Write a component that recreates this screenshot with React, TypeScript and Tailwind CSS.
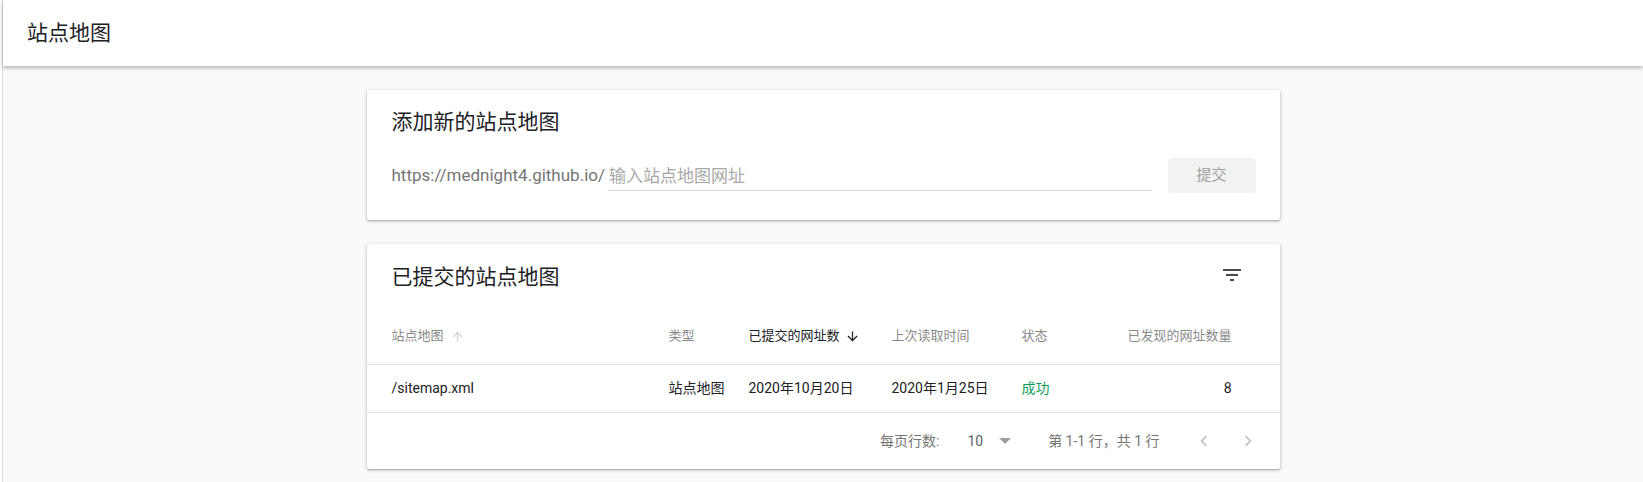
import React from 'react';

const font = "font-['Roboto','Noto_Sans_CJK_SC',sans-serif]";

const FilterIcon: React.FC = () => (
  <svg width="24" height="24" viewBox="0 0 24 24" fill="#4a4a4a">
    <path d="M10 18h4v-2h-4v2zM3 6v2h18V6H3zm3 7h12v-2H6v2z" />
  </svg>
);

const ArrowUp: React.FC<{ color: string }> = ({ color }) => (
  <svg width="15" height="15" viewBox="0 0 24 24" fill={color}>
    <path d="M4 12l1.41 1.41L11 7.83V20h2V7.83l5.58 5.59L20 12l-8-8-8 8z" />
  </svg>
);

const ArrowDown: React.FC<{ color: string }> = ({ color }) => (
  <svg width="15" height="15" viewBox="0 0 24 24" fill={color}>
    <path d="M20 12l-1.41-1.41L13 16.17V4h-2v12.17l-5.58-5.59L4 12l8 8 8-8z" />
  </svg>
);

const Chevron: React.FC<{ dir: 'left' | 'right' }> = ({ dir }) => (
  <svg width="22" height="22" viewBox="0 0 24 24" fill="#c4c4c4">
    {dir === 'left' ? (
      <path d="M15.41 7.41L14 6l-6 6 6 6 1.41-1.41L10.83 12z" />
    ) : (
      <path d="M10 6L8.59 7.41 13.17 12l-4.58 4.59L10 18l6-6z" />
    )}
  </svg>
);

const cardShadow = 'shadow-[0_1px_2px_rgba(0,0,0,0.28),0_1px_4px_1px_rgba(0,0,0,0.1)]';

export default function App() {
  return (
    <div className={`flex min-h-screen bg-[#fafafa] ${font}`}>
      {/* sidebar edge */}
      <div className="w-[3px] shrink-0 border-r border-[#dcdcdc] bg-white" />

      <div className="flex-1 flex flex-col">
        {/* Header */}
        <header className="h-[66px] bg-white flex items-center pl-[24px] shadow-[0_2px_4px_rgba(0,0,0,0.28)] relative z-10">
          <h1 className="text-[21px] text-[#202124] leading-none">站点地图</h1>
        </header>

        <main className="flex flex-col items-center pt-[24px] pb-[14px] gap-[24px]">
          {/* Add new sitemap */}
          <section className={`w-[913px] bg-white rounded-[2px] ${cardShadow} px-[25px] pt-[20px] pb-[27px]`}>
            <h2 className="text-[21px] leading-[24px] text-[#202124]">添加新的站点地图</h2>
            <div className="flex items-center mt-[24px] -mr-px">
              <span className="text-[17px] text-[#757575] leading-none">https://mednight4.github.io/</span>
              <div className="flex-1 ml-[4px] h-[30px] border-b border-[#d6d6d6] flex items-center pt-[2px]">
                <span className="text-[17px] text-[#a8a8a8] leading-none">输入站点地图网址</span>
              </div>
              <button className="ml-[16px] w-[88px] h-[35px] rounded-[4px] bg-[#f2f2f2] text-[15px] text-[#9e9e9e]">
                提交
              </button>
            </div>
          </section>

          {/* Submitted sitemaps */}
          <section className={`w-[913px] bg-white rounded-[2px] ${cardShadow}`}>
            <div className="h-[64px] flex items-center justify-between pl-[25px] pr-[24px] pt-[2px]">
              <h2 className="text-[21px] leading-[24px] text-[#202124]">已提交的站点地图</h2>
              <button className="w-[48px] h-[48px] flex items-center justify-center -mt-[4px]">
                <FilterIcon />
              </button>
            </div>

            {/* Table head */}
            <div className="h-[57px] grid grid-cols-[277px_80px_143px_130px_1fr] items-center pl-[25px] pr-[48px] border-b border-[#e0e0e0] text-[13px] text-[#8a8a8a]">
              <div className="flex items-center gap-[6px]">
                <span>站点地图</span>
                <ArrowUp color="#d0d0d0" />
              </div>
              <div>类型</div>
              <div className="flex items-center gap-[5px] text-[#202124]">
                <span>已提交的网址数</span>
                <ArrowDown color="#202124" />
              </div>
              <div>上次读取时间</div>
              <div className="flex justify-between">
                <span>状态</span>
                <span>已发现的网址数量</span>
              </div>
            </div>

            {/* Row */}
            <div className="h-[48px] grid grid-cols-[277px_80px_143px_130px_1fr] items-center pl-[25px] pr-[48px] border-b border-[#e0e0e0] text-[14px] text-[#202124]">
              <div>/sitemap.xml</div>
              <div>站点地图</div>
              <div>2020年10月20日</div>
              <div>2020年1月25日</div>
              <div className="flex justify-between">
                <span className="text-[#0f9d58]">成功</span>
                <span>8</span>
              </div>
            </div>

            {/* Pagination */}
            <div className="h-[56px] flex items-center justify-end pr-[10px] text-[14px] text-[#757575]">
              <span>每页行数:</span>
              <span className="ml-[28px] text-[14px] text-[#5f6368]">10</span>
              <svg className="ml-[16px]" width="12" height="6" viewBox="0 0 12 6" fill="#9e9e9e">
                <path d="M0 0h12L6 6z" />
              </svg>
              <span className="ml-[37px]">第 1-1 行，共 1 行</span>
              <div className="ml-[22px] flex">
                <button className="w-[44px] h-[40px] flex items-center justify-center">
                  <Chevron dir="left" />
                </button>
                <button className="w-[44px] h-[40px] flex items-center justify-center">
                  <Chevron dir="right" />
                </button>
              </div>
            </div>
          </section>
        </main>
      </div>
    </div>
  );
}
